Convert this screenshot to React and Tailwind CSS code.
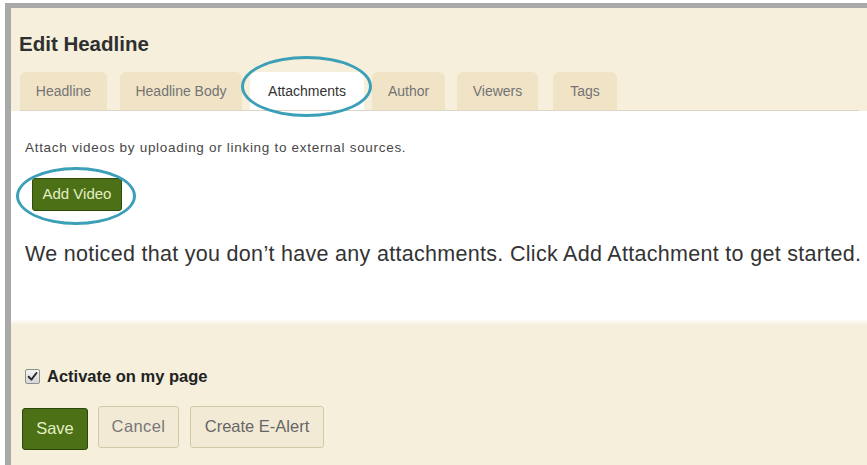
import React from "react";

const tabs = [
  { label: "Headline", w: "w-[87px]", ml: "ml-0" },
  { label: "Headline Body", w: "w-[122px]", ml: "ml-[13px]" },
  { label: "Attachments", w: "w-[114px]", ml: "ml-[8px]", active: true },
  { label: "Author", w: "w-[73px]", ml: "ml-[8px]" },
  { label: "Viewers", w: "w-[81px]", ml: "ml-[12px]" },
  { label: "Tags", w: "w-[64px]", ml: "ml-[15px]" },
];

function CheckMark() {
  return (
    <span className="flex h-[15px] w-[15px] items-center justify-center rounded-[2px] border border-[#8f8f8f] bg-gradient-to-b from-[#f4f4f4] to-[#d6d6d6]">
      <svg width="11" height="11" viewBox="0 0 10 10">
        <path d="M1.5 5.2 L4 7.8 L8.6 1.8" fill="none" stroke="#2b2b2b" strokeWidth="1.8" strokeLinecap="round" strokeLinejoin="round" />
      </svg>
    </span>
  );
}

export default function App() {
  return (
    <div className="h-[465px] w-[867px] overflow-hidden bg-white pl-[5px] pt-[3px] font-['Liberation_Sans',Arial,sans-serif]">
      <div className="flex h-full flex-col border-l-[6px] border-t-[5px] border-[#a9a9a9] bg-[#f5efdc]">
        {/* Header with title and tab strip */}
        <div className="flex flex-col px-[8px] pt-[25px]">
          <h1 className="text-[20.5px] font-bold leading-[22px] text-[#2f2f2f]">Edit Headline</h1>
          <div className="mt-[17px] ml-[1px] flex items-end border-b border-[#ddd6c4]">
            {tabs.map((t) => (
              <div
                key={t.label}
                className={`relative ${t.w} ${t.ml} flex h-[38px] items-center justify-center rounded-t-[6px] text-[14px] ${
                  t.active ? "bg-white text-[#333]" : "bg-[#f0e3c6] text-[#747474]"
                }`}
              >
                {t.label}
                {t.active && (
                  <span className="pointer-events-none absolute left-[-9px] top-[-16px] h-[61px] w-[131px] rounded-[50%] border-[3px] border-[#3c9fb8]" />
                )}
              </div>
            ))}
          </div>
        </div>

        {/* Attachment panel */}
        <div className="flex h-[208px] flex-col bg-white px-[14px] pt-[30px]">
          <p className="text-[13.5px] leading-[14px] tracking-[0.7px] text-[#474747]">
            Attach videos by uploading or linking to external sources.
          </p>
          <div className="relative ml-[7px] mt-[23px] self-start">
            <button className="flex h-[33px] w-[90px] items-center justify-center rounded-[3px] border border-[#2f4a0b] bg-[#4b7015] text-[15px] text-[#e3efc6]">
              Add Video
            </button>
            <span className="pointer-events-none absolute left-[-16px] top-[-11px] h-[58px] w-[120px] rounded-[50%] border-[3px] border-[#3c9fb8]" />
          </div>
          <p className="mt-[31px] whitespace-nowrap text-[21.5px] leading-[24px] tracking-[0.3px] text-[#333]">
            We noticed that you don’t have any attachments. Click Add Attachment to get started.
          </p>
        </div>
        <div className="h-[6px] bg-gradient-to-b from-white to-[#f5efdc]" />

        {/* Footer actions */}
        <div className="flex flex-col px-[14px] pt-[39px]">
          <label className="flex items-center gap-[7px]">
            <CheckMark />
            <span className="text-[16.5px] font-bold text-[#222]">Activate on my page</span>
          </label>
          <div className="mt-[17px] flex items-start gap-[10px]">
            <button className="-ml-[3px] mt-[2px] flex h-[42px] w-[66px] items-center justify-center rounded-[3px] border border-[#2c4709] bg-[#4b7015] text-[16.5px] text-[#e3efc6]">
              Save
            </button>
            <button className="flex h-[42px] w-[81px] items-center justify-center rounded-[3px] border border-[#d4c8ab] bg-[#f3ead5] text-[16.5px] tracking-[0.4px] text-[#777]">
              Cancel
            </button>
            <button className="ml-[1px] flex h-[42px] w-[134px] items-center justify-center rounded-[3px] border border-[#d4c8ab] bg-[#f3ead5] text-[16.5px] text-[#666]">
              Create E-Alert
            </button>
          </div>
        </div>
      </div>
    </div>
  );
}
